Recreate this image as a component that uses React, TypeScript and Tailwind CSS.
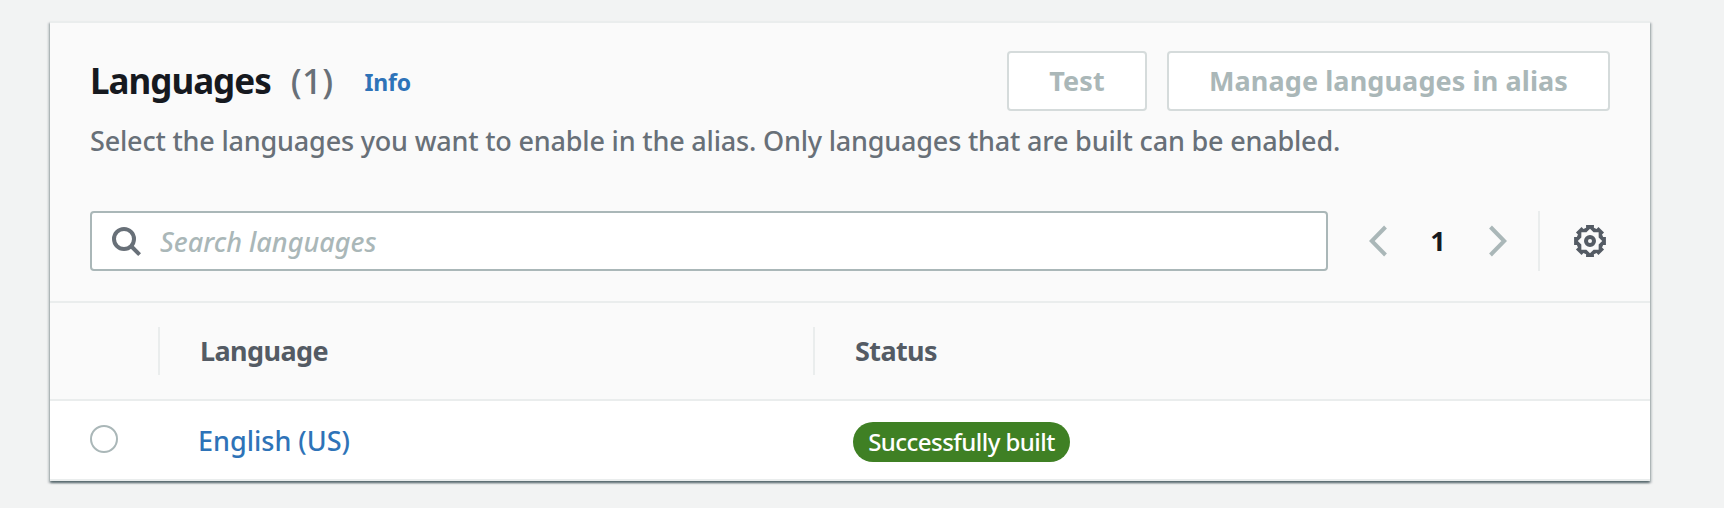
import React from "react";

const polar = (radius: number, degrees: number) => {
  const a = (degrees * Math.PI) / 180;
  return `${(16 + radius * Math.sin(a)).toFixed(2)} ${(16 - radius * Math.cos(a)).toFixed(2)}`;
};

const teeth = Array.from({ length: 8 }, (_, i) => i * 45);
const gearOutline =
  "M" +
  teeth
    .flatMap((t) => [polar(13.7, t - 16.5), polar(16.4, t - 14), polar(16.4, t + 14), polar(13.7, t + 16.5)])
    .join("L") +
  "Z";
const gearHole = "M" + teeth.flatMap((t) => [polar(12.2, t), polar(9.4, t + 22.5)]).join("L") + "Z";

function GearIcon() {
  return (
    <svg viewBox="0 0 32 32" className="size-8 text-[#545b64]" aria-hidden="true">
      <path d={gearOutline + gearHole} fill="currentColor" fillRule="evenodd" />
      <circle cx="16" cy="16" r="4" fill="none" stroke="currentColor" strokeWidth="4" />
    </svg>
  );
}

function SearchIcon() {
  return (
    <svg viewBox="0 0 32 32" className="size-8 text-[#687078]" aria-hidden="true">
      <g fill="none" stroke="currentColor" strokeWidth="4">
        <circle cx="14" cy="14" r="10" />
        <path d="M21 21l8.6 8.6" />
      </g>
    </svg>
  );
}

function Chevron({ direction }: { direction: "left" | "right" }) {
  return (
    <svg viewBox="0 0 18 32" className="h-8 w-[18px] text-[#aab7b8]" aria-hidden="true">
      <path
        d={direction === "left" ? "M16.5 2L2.8 16l13.7 14" : "M1.5 2l13.7 14L1.5 30"}
        fill="none"
        stroke="currentColor"
        strokeWidth="4"
      />
    </svg>
  );
}

function DisabledButton({ children, className }: { children: React.ReactNode; className: string }) {
  return (
    <button
      disabled
      className={`flex h-[60px] items-center justify-center rounded-[4px] border-2 border-[#d5dbdb] bg-white text-[27px] leading-9 font-bold tracking-[0.1px] whitespace-nowrap text-[#aab7b8] ${className}`}
    >
      {children}
    </button>
  );
}

export default function App() {
  return (
    <div className="h-[508px] w-[1724px] bg-[#f2f3f3] pt-[21px] pl-[50px] font-['Noto_Sans',sans-serif]">
      <section className="w-[1600px] border-y-2 border-[#eaeded] bg-white shadow-[0_2px_2px_0_rgba(0,28,36,0.5),2px_2px_2px_0_rgba(0,28,36,0.15),-2px_2px_2px_0_rgba(0,28,36,0.15)]">
        <header className="h-[280px] border-b-2 border-[#eaeded] bg-[#fafafa] px-10 pt-7">
          <div className="flex h-[60px] items-center">
            <h2 className="text-[35px] leading-[60px] font-bold tracking-[-1px] text-[#16191f]">Languages</h2>
            <span className="ml-5 text-[35px] leading-[60px] font-medium tracking-[0.3px] text-[#687078]">(1)</span>
            <a className="mt-[2px] ml-[31px] text-[23px] leading-8 font-bold tracking-[-0.2px] text-[#2e73b8]">Info</a>
            <div className="ml-auto flex gap-5">
              <DisabledButton className="w-[140px]">Test</DisabledButton>
              <DisabledButton className="w-[443px]">Manage languages in alias</DisabledButton>
            </div>
          </div>
          <p className="mt-[10px] h-[40px] text-[27px] leading-[40px] font-medium tracking-[-0.19px] whitespace-nowrap text-[#687078]">
            Select the languages you want to enable in the alias. Only languages that are built can be enabled.
          </p>
          <div className="mt-[50px] flex h-[60px] items-center">
            <div className="flex h-[60px] w-[1238px] items-center rounded-[4px] border-2 border-[#aab7b8] bg-white pl-[18px]">
              <SearchIcon />
              <span className="ml-[18px] pt-[1px] text-[27px] leading-9 font-medium text-[#aab7b8] italic">Search languages</span>
            </div>
            <div className="ml-[41px] flex items-center">
              <Chevron direction="left" />
              <span className="w-[102px] text-center text-[27px] leading-9 font-bold text-[#16191f]">1</span>
              <Chevron direction="right" />
            </div>
            <div className="ml-[31px] h-[60px] w-[2px] bg-[#eaeded]" />
            <div className="ml-[34px]">
              <GearIcon />
            </div>
          </div>
        </header>
        <div className="flex h-[98px] items-center border-b-2 border-[#eaeded] bg-[#fafafa] text-[27px] leading-9 font-bold tracking-[-0.6px] text-[#545b64]">
          <div className="h-12 w-[110px] border-r-2 border-[#eaeded]" />
          <div className="flex h-12 w-[655px] items-center border-r-2 border-[#eaeded] pl-10">Language</div>
          <div className="pl-10">Status</div>
        </div>
        <div className="flex h-[78px]">
          <div className="w-[148px] pt-6 pl-10">
            <div className="size-7 rounded-full border-2 border-[#aab7b8] bg-white" />
          </div>
          <a className="w-[655px] pt-[22px] text-[27px] leading-9 font-medium text-[#2e73b8]">English (US)</a>
          <div className="pt-[21px]">
            <span className="flex h-10 w-[217px] items-center justify-center rounded-full bg-[#3f8024] text-[24px] leading-8 font-medium tracking-[-0.55px] whitespace-nowrap text-white">
              Successfully built
            </span>
          </div>
        </div>
      </section>
    </div>
  );
}
